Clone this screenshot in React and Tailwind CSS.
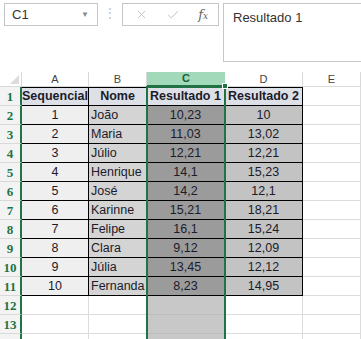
import React from "react";
import { X, Check } from "lucide-react";

const rows = [
  [1, "João", "10,23", "10"],
  [2, "Maria", "11,03", "13,02"],
  [3, "Júlio", "12,21", "12,21"],
  [4, "Henrique", "14,1", "15,23"],
  [5, "José", "14,2", "12,1"],
  [6, "Karinne", "15,21", "18,21"],
  [7, "Felipe", "16,1", "15,24"],
  [8, "Clara", "9,12", "12,09"],
  [9, "Júlia", "13,45", "12,12"],
  [10, "Fernanda", "8,23", "14,95"],
];

const RowHead = ({ n }) => (
  <div className="flex items-center justify-center border-b border-[#d9d9d9] border-r-2 border-r-[#217346] bg-[#f3f3f3] pt-[1px] font-['Liberation_Serif'] text-[13px] font-bold text-[#217346]">
    {n}
  </div>
);

const Empty = ({ sel }) => (
  <div
    className={
      sel
        ? "border-b border-r border-[#bdbdbd] bg-[#c8c8c8]"
        : "border-b border-r border-[#dcdcdc] bg-white"
    }
  />
);

const App = () => {
  return (
    <div className="h-[339px] w-[361px] overflow-hidden bg-white font-['Liberation_Sans',sans-serif] text-[#1b1b2b]">
      {/* formula bar */}
      <div className="flex h-[72px] pt-[3px]">
        <div className="ml-[4px] flex h-[23px] w-[94px] items-center justify-between border border-[#c6c6c6] pl-[7px] pr-[8px]">
          <span className="text-[13px] text-[#333]">C1</span>
          <span className="text-[8px] text-[#8a8a8a]">▼</span>
        </div>
        <div className="flex w-[24px] items-start justify-center pt-[4px] text-[12px] leading-none text-[#c0c0c0]">
          ⋮
        </div>
        <div className="flex h-[23px] w-[97px] items-center border border-[#c6c6c6]">
          <div className="flex w-[36px] justify-center pl-[2px]">
            <X size={13} strokeWidth={1.4} color="#b4b4b4" />
          </div>
          <div className="flex w-[30px] justify-center">
            <Check size={14} strokeWidth={1.4} color="#b4b4b4" />
          </div>
          <div className="flex w-[30px] items-baseline justify-center font-['DejaVu_Serif',serif] italic text-[#666]">
            <span className="text-[13px]">f</span>
            <span className="text-[9px]">x</span>
          </div>
        </div>
        <div className="ml-[4px] h-[59px] flex-1 border border-r-0 border-[#c6c6c6] pl-[9px] pt-[4px] text-[13px] text-[#333]">
          Resultado 1
        </div>
      </div>

      {/* sheet */}
      <div className="relative">
        <div className="grid grid-cols-[22px_67px_58px_78px_78px_58px] grid-rows-[15px_repeat(14,19px)] text-[12.5px]">
          <div className="relative border-b border-r border-[#d9d9d9] bg-white">
            <div className="absolute bottom-[2px] right-[2px] h-0 w-0 border-b-[9px] border-l-[9px] border-b-[#dcdcdc] border-l-transparent" />
          </div>
          {["A", "B"].map((c) => (
            <div
              key={c}
              className="flex items-center justify-center border-b border-r border-[#d9d9d9] text-[11px] text-[#444]"
            >
              {c}
            </div>
          ))}
          <div className="flex items-center justify-center border-b-2 border-[#217346] bg-[#a3d9bb] text-[11px] font-bold text-[#1d5c38]">
            C
          </div>
          {["D", "E"].map((c) => (
            <div
              key={c}
              className="flex items-center justify-center border-b border-r border-[#d9d9d9] text-[11px] text-[#444]"
            >
              {c}
            </div>
          ))}

          {/* row 1 */}
          <RowHead n={1} />
          <div className="flex items-center justify-center border-b border-r border-t border-black bg-[#dde1e7] font-bold">
            Sequencial
          </div>
          <div className="flex items-center justify-center border-b border-r border-t border-black bg-[#dde1e7] font-bold">
            Nome
          </div>
          <div className="flex items-center justify-center border-b border-r border-t border-black bg-[#dde1e7] font-bold">
            Resultado 1
          </div>
          <div className="flex items-center justify-center border-b border-r border-t border-black bg-[#dde1e7] font-bold">
            Resultado 2
          </div>
          <Empty />

          {rows.map((r, i) => (
            <React.Fragment key={r[0]}>
              <RowHead n={i + 2} />
              <div className="flex items-center justify-center border-b border-r border-black bg-[#efefef]">
                {r[0]}
              </div>
              <div className="flex items-center border-b border-r border-black bg-[#d4d4d4] pl-[2px]">
                {r[1]}
              </div>
              <div className="flex items-center justify-center border-b border-r border-black bg-[#9b9b9b]">
                {r[2]}
              </div>
              <div className="flex items-center justify-center border-b border-r border-black bg-[#c3c3c3]">
                {r[3]}
              </div>
              <Empty />
            </React.Fragment>
          ))}

          {[12, 13, ""].map((n) => (
            <React.Fragment key={n}>
              <RowHead n={n} />
              <Empty />
              <Empty />
              <Empty sel />
              <Empty />
              <Empty />
            </React.Fragment>
          ))}
        </div>

        {/* selection outline for column C */}
        <div className="pointer-events-none absolute bottom-0 left-[146px] top-[14px] w-[80px] border-2 border-b-0 border-[#217346]" />
        <div className="absolute left-[222px] top-[11px] h-[6px] w-[6px] border border-white bg-[#217346]" />
      </div>
    </div>
  );
};

export default App;
